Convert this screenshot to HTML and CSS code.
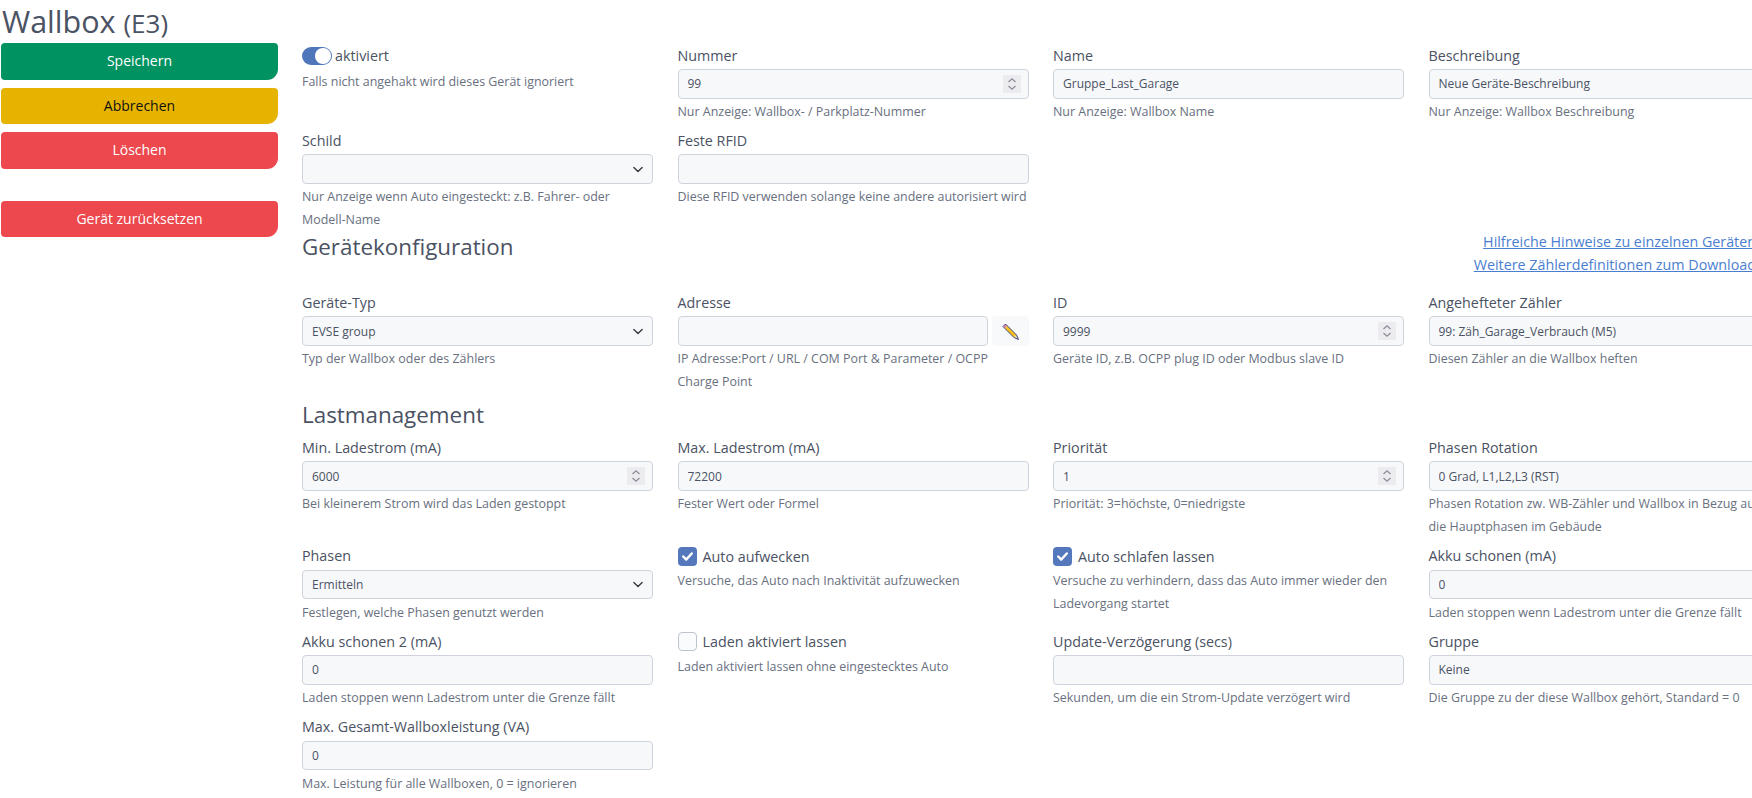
FILE: index.html
```html
<!DOCTYPE html>
<html lang="de">
<head>
<meta charset="utf-8">
<title>Wallbox (E3)</title>
<link rel="stylesheet" href="styles.css">
</head>
<body>
<h1 class="title">Wallbox <small class="title-sub">(E3)</small></h1>
<div class="page">
  <aside class="actions">
    <button class="btn btn-green" type="button">Speichern</button>
    <button class="btn btn-yellow" type="button">Abbrechen</button>
    <button class="btn btn-red" type="button">Löschen</button>
    <button class="btn btn-red btn-apart" type="button">Gerät zurücksetzen</button>
  </aside>
  <main class="content">
    <div class="grid">
      <div class="field">
        <div class="switch-line"><span class="switch"><span class="knob"></span></span><span class="switch-text">aktiviert</span></div>
        <p class="hint hint-switch">Falls nicht angehakt wird dieses Gerät ignoriert</p>
      </div>
      <div class="field">
        <label class="label">Nummer</label>
        <div class="number">
          <input class="input" type="number" value="99">
          <span class="spin"><svg viewBox="0 0 18 18" width="18" height="18"><path d="M5.5 7 L9 3.8 L12.5 7 M5.5 11 L9 14.2 L12.5 11" fill="none" stroke="#8c8f96" stroke-width="1.3"/></svg></span>
        </div>
        <p class="hint">Nur Anzeige: Wallbox- / Parkplatz-Nummer</p>
      </div>
      <div class="field">
        <label class="label">Name</label>
        <input class="input" type="text" value="Gruppe_Last_Garage">
        <p class="hint">Nur Anzeige: Wallbox Name</p>
      </div>
      <div class="field">
        <label class="label">Beschreibung</label>
        <input class="input" type="text" value="Neue Geräte-Beschreibung">
        <p class="hint">Nur Anzeige: Wallbox Beschreibung</p>
      </div>

      <div class="field">
        <label class="label">Schild</label>
        <select class="input select"><option></option></select>
        <p class="hint">Nur Anzeige wenn Auto eingesteckt: z.B. Fahrer- oder Modell-Name</p>
      </div>
      <div class="field">
        <label class="label">Feste RFID</label>
        <input class="input" type="text">
        <p class="hint">Diese RFID verwenden solange keine andere autorisiert wird</p>
      </div>
      <div></div>
      <div></div>
    </div>

    <div class="section-head">
      <h2 class="heading">Gerätekonfiguration</h2>
      <div class="links">
        <a class="link" href="#">Hilfreiche Hinweise zu einzelnen Geräten</a>
        <a class="link" href="#">Weitere Zählerdefinitionen zum Download</a>
      </div>
    </div>

    <div class="grid">
      <div class="field">
        <label class="label">Geräte-Typ</label>
        <select class="input select"><option>EVSE group</option></select>
        <p class="hint">Typ der Wallbox oder des Zählers</p>
      </div>
      <div class="field">
        <label class="label">Adresse</label>
        <div class="input-row">
          <input class="input" type="text">
          <button class="pencil-btn" type="button" aria-label="Bearbeiten">
            <svg class="pencil" viewBox="0 0 17 17" width="17" height="17">
              <path d="M1 3.5 L3.5 1 L5.5 3 L3 5.5 Z" fill="#ee8f9a"/>
              <path d="M3 5.5 L5.5 3 L14.5 12 L12 14.5 Z" fill="#fbc21c"/>
              <path d="M12 14.5 L14.5 12 L16.5 16.5 Z" fill="#f3d9a8"/>
              <path d="M1 3.5 L3.5 1 L14.5 12 L16.5 16.5 L12 14.5 Z" fill="none" stroke="#26357c" stroke-width="0.9" stroke-linejoin="round"/>
            </svg>
          </button>
        </div>
        <p class="hint">IP Adresse:Port / URL / COM Port &amp; Parameter / OCPP Charge Point</p>
      </div>
      <div class="field">
        <label class="label">ID</label>
        <div class="number">
          <input class="input" type="number" value="9999">
          <span class="spin"><svg viewBox="0 0 18 18" width="18" height="18"><path d="M5.5 7 L9 3.8 L12.5 7 M5.5 11 L9 14.2 L12.5 11" fill="none" stroke="#8c8f96" stroke-width="1.3"/></svg></span>
        </div>
        <p class="hint">Geräte ID, z.B. OCPP plug ID oder Modbus slave ID</p>
      </div>
      <div class="field">
        <label class="label">Angehefteter Zähler</label>
        <select class="input select"><option>99: Zäh_Garage_Verbrauch (M5)</option></select>
        <p class="hint">Diesen Zähler an die Wallbox heften</p>
      </div>
    </div>

    <h2 class="heading heading-load">Lastmanagement</h2>

    <div class="grid">
      <div class="field">
        <label class="label">Min. Ladestrom (mA)</label>
        <div class="number">
          <input class="input" type="number" value="6000">
          <span class="spin"><svg viewBox="0 0 18 18" width="18" height="18"><path d="M5.5 7 L9 3.8 L12.5 7 M5.5 11 L9 14.2 L12.5 11" fill="none" stroke="#8c8f96" stroke-width="1.3"/></svg></span>
        </div>
        <p class="hint">Bei kleinerem Strom wird das Laden gestoppt</p>
      </div>
      <div class="field">
        <label class="label">Max. Ladestrom (mA)</label>
        <input class="input" type="text" value="72200">
        <p class="hint">Fester Wert oder Formel</p>
      </div>
      <div class="field">
        <label class="label">Priorität</label>
        <div class="number">
          <input class="input" type="number" value="1">
          <span class="spin"><svg viewBox="0 0 18 18" width="18" height="18"><path d="M5.5 7 L9 3.8 L12.5 7 M5.5 11 L9 14.2 L12.5 11" fill="none" stroke="#8c8f96" stroke-width="1.3"/></svg></span>
        </div>
        <p class="hint">Priorität: 3=höchste, 0=niedrigste</p>
      </div>
      <div class="field">
        <label class="label">Phasen Rotation</label>
        <select class="input select"><option>0 Grad, L1,L2,L3 (RST)</option></select>
        <p class="hint">Phasen Rotation zw. WB-Zähler und Wallbox in Bezug auf die Hauptphasen im Gebäude</p>
      </div>

      <div class="field">
        <label class="label">Phasen</label>
        <select class="input select"><option>Ermitteln</option></select>
        <p class="hint">Festlegen, welche Phasen genutzt werden</p>
      </div>
      <div class="field">
        <div class="check-line">
          <span class="check check-on"><svg viewBox="0 0 20 20" width="19" height="19"><path d="M5.5 10 L8.7 13.2 L14.5 6.8" fill="none" stroke="#fff" stroke-width="2.6" stroke-linecap="round" stroke-linejoin="round"/></svg></span>
          <span class="check-text">Auto aufwecken</span>
        </div>
        <p class="hint">Versuche, das Auto nach Inaktivität aufzuwecken</p>
      </div>
      <div class="field">
        <div class="check-line">
          <span class="check check-on"><svg viewBox="0 0 20 20" width="19" height="19"><path d="M5.5 10 L8.7 13.2 L14.5 6.8" fill="none" stroke="#fff" stroke-width="2.6" stroke-linecap="round" stroke-linejoin="round"/></svg></span>
          <span class="check-text">Auto schlafen lassen</span>
        </div>
        <p class="hint">Versuche zu verhindern, dass das Auto immer wieder den Ladevorgang startet</p>
      </div>
      <div class="field">
        <label class="label">Akku schonen (mA)</label>
        <input class="input" type="text" value="0">
        <p class="hint">Laden stoppen wenn Ladestrom unter die Grenze fällt</p>
      </div>

      <div class="field">
        <label class="label">Akku schonen 2 (mA)</label>
        <input class="input" type="text" value="0">
        <p class="hint">Laden stoppen wenn Ladestrom unter die Grenze fällt</p>
      </div>
      <div class="field">
        <div class="check-line">
          <span class="check"></span>
          <span class="check-text">Laden aktiviert lassen</span>
        </div>
        <p class="hint">Laden aktiviert lassen ohne eingestecktes Auto</p>
      </div>
      <div class="field">
        <label class="label">Update-Verzögerung (secs)</label>
        <input class="input" type="text">
        <p class="hint">Sekunden, um die ein Strom-Update verzögert wird</p>
      </div>
      <div class="field">
        <label class="label">Gruppe</label>
        <select class="input select"><option>Keine</option></select>
        <p class="hint">Die Gruppe zu der diese Wallbox gehört, Standard = 0</p>
      </div>

      <div class="field">
        <label class="label">Max. Gesamt-Wallboxleistung (VA)</label>
        <input class="input" type="text" value="0">
        <p class="hint">Max. Leistung für alle Wallboxen, 0 = ignorieren</p>
      </div>
    </div>
  </main>
</div>
</body>
</html>
```

FILE: styles.css
```css
* { box-sizing: border-box; }
html, body { margin: 0; padding: 0; height: 798px; overflow: hidden; background: #fff; }
body {
  font-family: "Open Sans", "Noto Sans", sans-serif;
  color: #4a5263;
  width: 1790px;
}
.title {
  margin: 0;
  padding-left: 2px;
  height: 43px;
  font-size: 30.5px;
  line-height: 43px;
  font-weight: 400;
  color: #4a5263;
}
.title-sub { font-size: 26px; }
.page { display: flex; align-items: flex-start; }
.actions {
  width: 277px;
  margin-left: 1px;
  display: flex;
  flex-direction: column;
  gap: 8px;
  flex: none;
}
.btn {
  height: 36.5px;
  border: 0;
  padding: 0;
  border-radius: 4px 4px 11px 4px;
  font: 14px/1 "Open Sans", sans-serif;
  color: #fff;
}
.btn-green { background: #009260; }
.btn-yellow { background: #e6b400; color: #111; }
.btn-red { background: #ec484d; }
.btn-apart { margin-top: 24px; }
.content { margin-left: 24px; width: 1478px; padding-top: 0.5px; flex: none; }
.grid {
  display: grid;
  grid-template-columns: repeat(4, 351px);
  column-gap: 24.5px;
  row-gap: 5.2px;
  align-items: start;
}
.field { min-width: 0; }
.label {
  display: block;
  font-size: 14.3px;
  line-height: 23px;
  height: 25.5px;
}
.input {
  display: block;
  width: 100%;
  height: 29.5px;
  padding: 0 9px;
  font: 12px "Open Sans", sans-serif;
  color: #4a5263;
  background-color: #f7f8fa;
  border: 1px solid #ced3dc;
  border-radius: 4px;
  outline: 0;
}
input[type=number] { appearance: textfield; }
input[type=number]::-webkit-inner-spin-button,
input[type=number]::-webkit-outer-spin-button { -webkit-appearance: none; margin: 0; }
.number { position: relative; }
.spin {
  position: absolute;
  top: 6px;
  right: 8px;
  width: 18px;
  height: 18px;
  background: #ececf0;
}
.spin svg { display: block; }
.select {
  -webkit-appearance: none;
  appearance: none;
  padding-right: 30px;
  background-image: url("data:image/svg+xml,%3csvg xmlns='http://www.w3.org/2000/svg' viewBox='0 0 16 16'%3e%3cpath fill='none' stroke='%23343a40' stroke-linecap='round' stroke-linejoin='round' stroke-width='2' d='M2 5l6 6 6-6'/%3e%3c/svg%3e");
  background-repeat: no-repeat;
  background-position: right 7px center;
  background-size: 14px 11px;
}
.hint {
  margin: 2.5px 0 0;
  font-size: 12.45px;
  line-height: 22.8px;
  color: #697080;
}
.hint-switch { margin-top: 2px; }
.switch-line { display: flex; align-items: center; height: 25px; gap: 3px; }
.switch {
  width: 30px;
  height: 18.5px;
  border-radius: 10px;
  background: #4f76bb;
  display: flex;
  justify-content: flex-end;
  align-items: center;
  padding-right: 1.5px;
}
.knob { width: 15.5px; height: 15.5px; border-radius: 50%; background: #fff; }
.switch-text { font-size: 14.3px; line-height: 18px; }
.section-head {
  display: flex;
  justify-content: space-between;
  align-items: flex-start;
  height: 58.8px;
}
.heading {
  margin: 0;
  font-size: 22.4px;
  font-weight: 400;
  line-height: 30px;
}
.heading-load { padding-top: 6.5px; padding-bottom: 5.5px; }
.links { display: flex; flex-direction: column; align-items: flex-end; margin-top: -2px; margin-right: 24px; }
.link { font-size: 14.3px; line-height: 23px; color: #4a7ed0; text-decoration: underline; }
.input-row { display: flex; gap: 4px; }
.input-row .input { flex: 1; min-width: 0; }
.pencil-btn {
  width: 36.5px;
  height: 29.5px;
  flex: none;
  border: 0;
  padding: 0;
  border-radius: 4px;
  background: #f8f9fa;
  display: flex;
  align-items: center;
  justify-content: center;
}
.pencil { display: block; }
.check-line { display: flex; align-items: center; gap: 6px; height: 23px; padding-top: 1px; }
.check {
  width: 19px;
  height: 19px;
  flex: none;
  border-radius: 4px;
  border: 1px solid #bfc4cc;
  background: #fafbfc;
  display: block;
}
.check-on { background: #5478bb; border: 0; }
.check svg { display: block; }
.check-text { font-size: 14.3px; }
.field > .check-line + .hint { margin-top: 3px; }
```
